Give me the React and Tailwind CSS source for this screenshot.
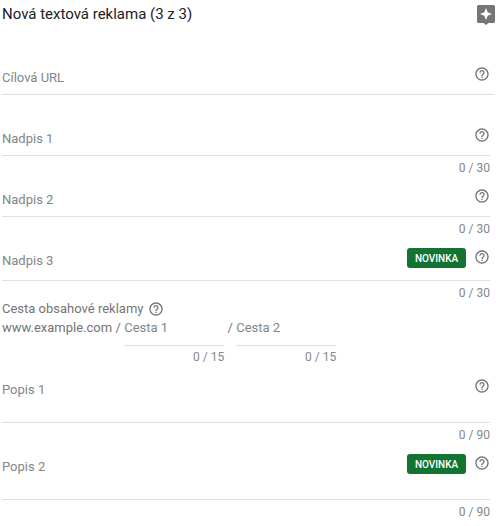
function HelpIcon() {
  return (
    <svg viewBox="0 0 24 24" className="h-4 w-4 shrink-0 fill-[#757575]">
      <path d="M11 18h2v-2h-2v2zm1-16C6.48 2 2 6.48 2 12s4.48 10 10 10 10-4.48 10-10S17.52 2 12 2zm0 18c-4.41 0-8-3.59-8-8s3.59-8 8-8 8 3.59 8 8-3.59 8-8 8zm0-14c-2.21 0-4 1.79-4 4h2c0-1.1.9-2 2-2s2 .9 2 2c0 2-3 1.75-3 5h2c0-2.25 3-2.5 3-5 0-2.21-1.79-4-4-4z" />
    </svg>
  )
}

function Badge() {
  return (
    <span className="-mt-px flex h-5 w-[59px] items-center justify-center rounded-[3px] bg-[#137333] text-[10px] font-medium text-white">
      NOVINKA
    </span>
  )
}

function Counter({ value }) {
  return <p className="h-[19px] pt-[5px] text-right text-xs leading-[14px] text-[#80868b]">{value}</p>
}

function Field({ label, isNew, count, rowClass }) {
  return (
    <div className="mr-[6px]">
      <div className={`flex items-start justify-between border-b border-[#e0e0e0] ${rowClass}`}>
        <span className="mt-px text-[13px] leading-5 text-[#80868b]">{label}</span>
        <div className="-mt-px flex items-start gap-2">
          {isNew && <Badge />}
          <HelpIcon />
        </div>
      </div>
      {count && <Counter value={count} />}
    </div>
  )
}

function PathInput({ label }) {
  return (
    <>
      <span className="w-3 text-center leading-5 text-[#757575]">/</span>
      <div className="w-[100px]">
        <div className="h-[28px] border-b border-[#e0e0e0] leading-5 text-[#80868b]">{label}</div>
        <p className="h-[18px] pt-1 text-right text-xs leading-[14px] text-[#80868b]">0 / 15</p>
      </div>
    </>
  )
}

export default function App() {
  return (
    <div className="h-[526px] w-[496px] overflow-hidden bg-white pl-[2px] font-['Roboto',sans-serif]">
      <div className="flex h-[28px] items-start justify-between">
        <h1 className="pt-[5px] text-[15px] leading-[18px] font-normal text-[#202124]">Nová textová reklama (3 z 3)</h1>
        <svg viewBox="0 0 18 20" className="mt-[5px] mr-px h-5 w-[18px]">
          <path fill="#757575" d="M1.500 0h15A1.500 1.500 0 0 1 18 1.500v15a1.500 1.500 0 0 1-1.500 1.500H11.500L9 20l-2.500-2H1.500A1.500 1.500 0 0 1 0 16.500v-15A1.500 1.500 0 0 1 1.500 0z" />
          <path fill="#fff" d="M9 3l1.700 4.300L15 9l-4.300 1.700L9 15l-1.700-4.300L3 9l4.300-1.700z" />
        </svg>
      </div>

      <div className="mr-[2px]">
        <div className="flex h-[67px] items-start justify-between border-b border-[#e0e0e0] pt-[39px] pr-1">
          <span className="mt-px text-[13px] leading-5 text-[#80868b]">Cílová URL</span>
          <div className="-mt-px">
            <HelpIcon />
          </div>
        </div>
      </div>

      <Field label="Nadpis 1" rowClass="h-[61px] pt-[33px]" count="0 / 30" />
      <Field label="Nadpis 2" rowClass="h-[42px] pt-[14px]" count="0 / 30" />
      <Field label="Nadpis 3" isNew rowClass="h-[45px] pt-[14px]" count="0 / 30" />

      <div className="flex h-[18px] items-center gap-[5px] text-[13px] text-[#757575]">
        Cesta obsahové reklamy <HelpIcon />
      </div>
      <div className="flex text-[13px]">
        <span className="leading-5 text-[#757575]">www.example.com</span>
        <PathInput label="Cesta 1" />
        <PathInput label="Cesta 2" />
      </div>

      <Field label="Popis 1" rowClass="h-[59px] pt-[15px]" count="0 / 90" />
      <Field label="Popis 2" isNew rowClass="h-[58px] pt-[14px]" count="0 / 90" />
    </div>
  )
}
